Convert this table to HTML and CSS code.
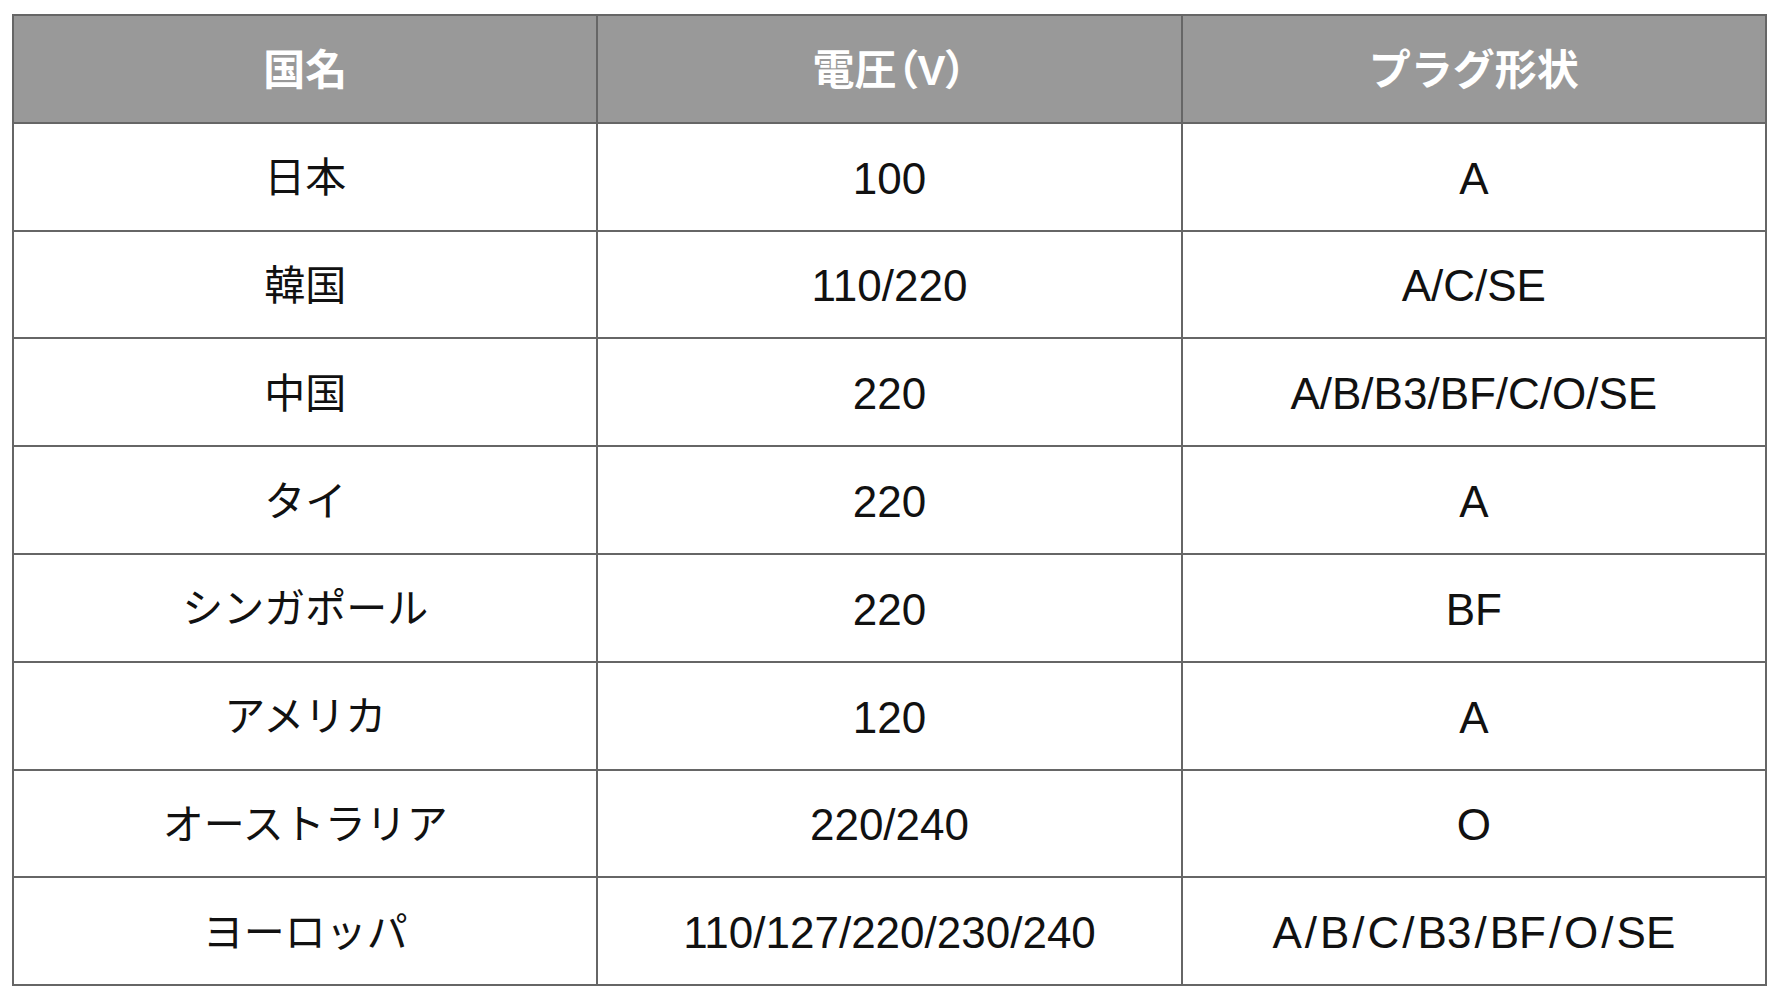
FILE: index.html
```html
<!DOCTYPE html>
<html lang="ja">
<head>
<meta charset="utf-8">
<title>電圧とプラグ形状</title>
<link rel="stylesheet" href="styles.css">
</head>
<body>
<table class="plug-table">
  <thead>
    <tr><th>国名</th><th class="volt-head">電圧（V）</th><th>プラグ形状</th></tr>
  </thead>
  <tbody>
    <tr><td>日本</td><td>100</td><td>A</td></tr>
    <tr><td>韓国</td><td>110/220</td><td>A/C/SE</td></tr>
    <tr><td>中国</td><td>220</td><td>A/B/B3/BF/C/O/SE</td></tr>
    <tr><td>タイ</td><td>220</td><td>A</td></tr>
    <tr><td>シンガポール</td><td>220</td><td>BF</td></tr>
    <tr><td>アメリカ</td><td>120</td><td>A</td></tr>
    <tr><td>オーストラリア</td><td>220/240</td><td>O</td></tr>
    <tr><td>ヨーロッパ</td><td>110/127/220/230/240</td><td>A<span class="sep">/</span>B<span class="sep">/</span>C<span class="sep">/</span>B3<span class="sep">/</span>BF<span class="sep">/</span>O<span class="sep">/</span>SE</td></tr>
  </tbody>
</table>
</body>
</html>
```
FILE: styles.css
```css
html, body {
  margin: 0;
  padding: 0;
  background: #ffffff;
}
body {
  padding: 14px 0 0 12px;
  font-family: "Liberation Sans", "Noto Sans CJK JP", sans-serif;
  color: #111111;
}
.plug-table {
  border-collapse: collapse;
  table-layout: fixed;
  width: 1755px;
}
.plug-table th,
.plug-table td {
  border: 2px solid #666666;
  text-align: center;
  vertical-align: middle;
  padding: 4px 0 0 0;
  line-height: 1;
}
.plug-table tr {
  height: 107.8px;
}
.plug-table th {
  background: #999999;
  color: #ffffff;
  font-weight: bold;
  font-size: 42px;
}
.plug-table .volt-head {
  font-feature-settings: "palt";
}
.plug-table td {
  font-weight: normal;
  font-size: 44px;
}
.plug-table td:first-child {
  font-size: 41px;
}
.plug-table .sep {
  margin: 0 3px;
}
```
